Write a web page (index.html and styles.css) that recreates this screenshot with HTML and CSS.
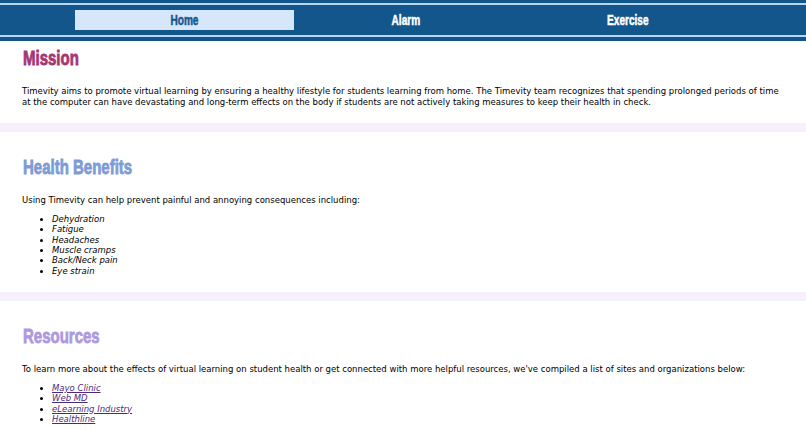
FILE: index.html
```html
<!DOCTYPE html>
<html lang="en">
<head>
<meta charset="utf-8">
<title>Timevity</title>
<link rel="stylesheet" href="styles.css">
</head>
<body>
<nav class="nav">
  <a class="nav-item active" href="#"><span class="squeeze">Home</span></a>
  <a class="nav-item" href="#"><span class="squeeze">Alarm</span></a>
  <a class="nav-item" href="#"><span class="squeeze">Exercise</span></a>
</nav>
<section class="section">
  <h1 class="title mission"><span class="title-text">Mission</span></h1>
  <p class="text">Timevity aims to promote virtual learning by ensuring a healthy lifestyle for students learning from home. The Timevity team recognizes that spending prolonged periods of time at the computer can have devastating and long-term effects on the body if students are not actively taking measures to keep their health in check.</p>
</section>
<div class="divider"></div>
<section class="section">
  <h1 class="title benefits"><span class="title-text">Health Benefits</span></h1>
  <p class="text">Using Timevity can help prevent painful and annoying consequences including:</p>
  <ul class="list">
    <li>Dehydration</li>
    <li>Fatigue</li>
    <li>Headaches</li>
    <li>Muscle cramps</li>
    <li>Back/Neck pain</li>
    <li>Eye strain</li>
  </ul>
</section>
<div class="divider"></div>
<section class="section">
  <h1 class="title resources"><span class="title-text">Resources</span></h1>
  <p class="text">To learn more about the effects of virtual learning on student health or get connected with more helpful resources, we've compiled a list of sites and organizations below:</p>
  <ul class="list">
    <li><a href="#">Mayo Clinic</a></li>
    <li><a href="#">Web MD</a></li>
    <li><a href="#">eLearning Industry</a></li>
    <li><a href="#">Healthline</a></li>
  </ul>
</section>
</body>
</html>
```
FILE: styles.css
```css
html, body { margin: 0; padding: 0; background: #fff; overflow: hidden; }
body { font-family: "DejaVu Sans", Verdana, sans-serif; font-size: 8.5px; line-height: 10.4px; color: #000; height: 430px; }
.nav {
  display: grid; grid-template-columns: repeat(3, 219px); column-gap: 2.5px;
  justify-content: start;
  background: #13568c; padding: 7px 0 7px 75px; height: 20px;
  border-top: 3px solid #13568c; border-bottom: 4px solid #13568c;
  box-shadow: inset 0 2px 0 #b9d7f2, inset 0 -2px 0 #b9d7f2;
}
.nav-item { display: flex; align-items: center; justify-content: center; text-decoration: none; color: #fff; font: bold 14px "Liberation Sans", sans-serif; }
.nav-item.active { background: #d6e6fb; color: #13568c; }
.squeeze { display: inline-block; transform: scaleX(0.72); -webkit-text-stroke: 0.5px currentColor; }
.section { padding: 0 22px; }
.title { margin: 0; font: bold 20px/24px "Liberation Sans", sans-serif; padding-top: 5px; -webkit-text-stroke: 0.8px currentColor; }
.title-text { display: inline-block; transform: scaleX(0.75); transform-origin: left center; margin-left: 1px; }
.mission { color: #a63574; }
.benefits { color: #7e9bd6; padding-top: 23px; }
.resources { color: #ae99de; padding-top: 23px; }
.text { margin: 16.4px 0 0; }
.list { margin: 8.2px 0 0; padding-left: 30px; font-style: italic; }
.list a { color: #4b2a7b; }
.divider { height: 9px; background: #f6f0fd; margin-top: 15.6px; }
```
